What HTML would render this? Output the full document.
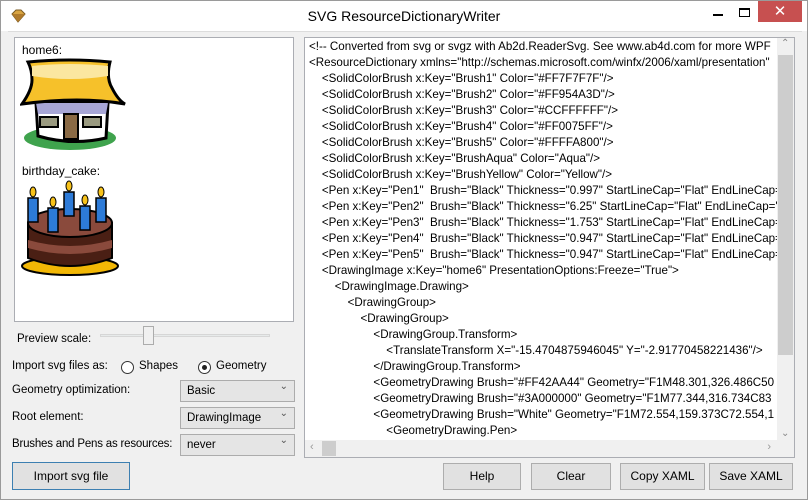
<!DOCTYPE html>
<html><head><style>
*{margin:0;padding:0;box-sizing:border-box}
body{width:808px;height:500px;overflow:hidden;background:#f0f0f0;font-family:"Liberation Sans",sans-serif;font-size:12px;color:#000;position:relative}
.win{position:absolute;left:0;top:0;width:808px;height:500px;border:1px solid #9a9a9a;background:#f0f0f0}
.title{position:absolute;left:0;top:0;width:806px;height:30px;background:#fff}
.title .t{position:absolute;left:0;width:806px;top:7px;text-align:center;font-size:14px;color:#000}
.close{position:absolute;left:757px;top:0;width:44px;height:21px;background:#c75050;color:#fff;text-align:center;font-size:15px;line-height:21px}
.a{position:absolute}
.l{position:absolute;font-size:11.5px}
.box{position:absolute;background:#fff;border:1px solid #abadb3}
.btn{position:absolute;background:#e1e1e1;border:1px solid #adadad;text-align:center;line-height:25px;font-size:12px}
.cb{position:absolute;background:#e5e5e5;border:1px solid #acacac;height:22px;line-height:20px;padding-left:6px;font-size:11.5px}
.cb:after{content:"⌄";position:absolute;right:6px;top:-4px;font-size:10px;color:#555}
.code{position:absolute;left:308px;top:38px;width:468px;height:402px;overflow:hidden;white-space:nowrap;line-height:16px;font-size:11.6px}
.code div{white-space:pre}
</style></head><body><div class="win">
<div class="title"><svg class="a" style="left:9px;top:8px" width="16" height="14"><polygon points="2,5 6,1 11,1 15,5 8,13" fill="#d9a441" stroke="#7a5a20"/><polygon points="2,5 15,5 8,13" fill="#b07a2a"/></svg>
<div class="t">SVG ResourceDictionaryWriter</div>
<div class="a" style="left:712px;top:13px;width:10px;height:2px;background:#000"></div>
<div class="a" style="left:738px;top:7px;width:11px;height:9px;border:1px solid #000;border-top-width:2px"></div>
<div class="close">✕</div></div>
<div class="a" style="left:7px;top:30px;width:794px;height:1px;background:#dcdcdc"></div>
<div class="box" style="left:13px;top:36px;width:280px;height:285px;border-color:#abadb3">
<div class="a" style="left:7px;top:5px">home6:</div>
<svg class="a" style="left:5px;top:20px" width="110" height="100" viewBox="0 0 110 100">
<ellipse cx="50" cy="80" rx="46" ry="12" fill="#3fa34d"/>
<path d="M16 45 L88 45 L86 80 Q52 88 18 78 Z" fill="#fff" stroke="#000" stroke-width="3"/>
<path d="M16 45 L88 45 L86 56 L18 56Z" fill="#a7a6d6"/>
<rect x="44" y="56" width="14" height="25" fill="#8a6a45" stroke="#000" stroke-width="2"/>
<rect x="20" y="59" width="18" height="10" fill="#9a9a80" stroke="#000" stroke-width="2"/>
<rect x="63" y="59" width="18" height="10" fill="#9a9a80" stroke="#000" stroke-width="2"/>
<path d="M8 4 Q50 0 90 4 Q86 20 92 30 Q98 42 105 46 Q60 38 2 46 Q12 32 12 22 Q12 12 8 4Z" fill="#f6c12a" stroke="#000" stroke-width="3"/>
<path d="M12 8 Q50 4 88 8 L88 18 Q50 24 12 18Z" fill="#fbe7a0"/>
</svg>
<div class="a" style="left:7px;top:126px">birthday_cake:</div>
<svg class="a" style="left:5px;top:140px" width="110" height="100" viewBox="0 0 110 100">
<ellipse cx="50" cy="88" rx="48" ry="9" fill="#f2b705" stroke="#000" stroke-width="2"/>
<path d="M8 45 L8 80 Q50 96 92 80 L92 45Z" fill="#4a1f14" stroke="#000" stroke-width="2"/>
<path d="M8 62 Q50 74 92 62 L92 70 Q50 82 8 70Z" fill="#8a4a3c"/>
<ellipse cx="50" cy="45" rx="42" ry="14" fill="#8a4a3c" stroke="#000" stroke-width="2"/>
<rect x="8" y="20" width="10" height="24" fill="#2d7bd8" stroke="#000" stroke-width="1.5"/>
<rect x="28" y="30" width="10" height="24" fill="#2d7bd8" stroke="#000" stroke-width="1.5"/>
<rect x="44" y="14" width="10" height="24" fill="#2d7bd8" stroke="#000" stroke-width="1.5"/>
<rect x="60" y="28" width="10" height="24" fill="#2d7bd8" stroke="#000" stroke-width="1.5"/>
<rect x="76" y="20" width="10" height="24" fill="#2d7bd8" stroke="#000" stroke-width="1.5"/>
<g fill="#f7c21a" stroke="#000"><ellipse cx="13" cy="14" rx="3" ry="5"/><ellipse cx="33" cy="24" rx="3" ry="5"/><ellipse cx="49" cy="8" rx="3" ry="5"/><ellipse cx="65" cy="22" rx="3" ry="5"/><ellipse cx="81" cy="14" rx="3" ry="5"/></g>
</svg>
</div>
<div class="l" style="left:16px;top:332px">Preview scale:</div>
<div class="a" style="left:99px;top:333px;width:170px;height:3px;background:#e7eaea;border:1px solid #d6d6d6"></div>
<div class="a" style="left:142px;top:325px;width:11px;height:19px;background:#f0f0f0;border:1px solid #acacac"></div>
<div class="l" style="left:11px;top:359px">Import svg files as:</div>
<div class="a" style="left:120px;top:360px;width:13px;height:13px;border:1px solid #333;border-radius:50%;background:#fff"></div>
<div class="l" style="left:138px;top:359px">Shapes</div>
<div class="a" style="left:197px;top:360px;width:13px;height:13px;border:1px solid #333;border-radius:50%;background:#fff"><div style="margin:3px;width:5px;height:5px;border-radius:50%;background:#222"></div></div>
<div class="l" style="left:215px;top:359px">Geometry</div>
<div class="l" style="left:11px;top:383px">Geometry optimization:</div>
<div class="l" style="left:11px;top:410px">Root element:</div>
<div class="l" style="left:11px;top:437px;letter-spacing:-0.2px">Brushes and Pens as resources:</div>
<div class="cb" style="left:179px;top:379px;width:115px">Basic</div>
<div class="cb" style="left:179px;top:406px;width:115px">DrawingImage</div>
<div class="cb" style="left:179px;top:433px;width:115px">never</div>
<div class="btn" style="left:11px;top:461px;width:118px;height:28px;border-color:#3c7fb1;line-height:26px">Import svg file</div>
<div class="box" style="left:303px;top:36px;width:491px;height:421px">
<div class="a" style="right:0;top:0;width:17px;height:403px;background:#f0f0f0"><div style="position:absolute;top:17px;left:1px;width:15px;height:300px;background:#cdcdcd"></div><div style="position:absolute;top:0;left:4px;font-size:10px;color:#888">⌃</div><div style="position:absolute;bottom:2px;left:4px;font-size:10px;color:#888">⌄</div></div>
<div class="a" style="left:0;bottom:0;width:472px;height:17px;background:#f0f0f0"><div style="position:absolute;left:17px;top:1px;width:14px;height:15px;background:#cdcdcd"></div><div style="position:absolute;left:5px;top:1px;font-size:11px;color:#999">‹</div><div style="position:absolute;right:6px;top:1px;font-size:11px;color:#999">›</div></div>
<div class="a" style="right:0;bottom:0;width:17px;height:17px;background:#f0f0f0"></div>
</div>
<div class="code">
<div>&lt;!-- Converted from svg or svgz with Ab2d.ReaderSvg. See www.ab4d.com for more WPF</div>
<div>&lt;ResourceDictionary xmlns="http://schemas.microsoft.com/winfx/2006/xaml/presentation"</div>
<div>    &lt;SolidColorBrush x:Key="Brush1" Color="#FF7F7F7F"/&gt;</div>
<div>    &lt;SolidColorBrush x:Key="Brush2" Color="#FF954A3D"/&gt;</div>
<div>    &lt;SolidColorBrush x:Key="Brush3" Color="#CCFFFFFF"/&gt;</div>
<div>    &lt;SolidColorBrush x:Key="Brush4" Color="#FF0075FF"/&gt;</div>
<div>    &lt;SolidColorBrush x:Key="Brush5" Color="#FFFFA800"/&gt;</div>
<div>    &lt;SolidColorBrush x:Key="BrushAqua" Color="Aqua"/&gt;</div>
<div>    &lt;SolidColorBrush x:Key="BrushYellow" Color="Yellow"/&gt;</div>
<div>    &lt;Pen x:Key="Pen1"  Brush="Black" Thickness="0.997" StartLineCap="Flat" EndLineCap="Flat"</div>
<div>    &lt;Pen x:Key="Pen2"  Brush="Black" Thickness="6.25" StartLineCap="Flat" EndLineCap="Flat"</div>
<div>    &lt;Pen x:Key="Pen3"  Brush="Black" Thickness="1.753" StartLineCap="Flat" EndLineCap="Flat"</div>
<div>    &lt;Pen x:Key="Pen4"  Brush="Black" Thickness="0.947" StartLineCap="Flat" EndLineCap="Flat"</div>
<div>    &lt;Pen x:Key="Pen5"  Brush="Black" Thickness="0.947" StartLineCap="Flat" EndLineCap="Flat"</div>
<div>    &lt;DrawingImage x:Key="home6" PresentationOptions:Freeze="True"&gt;</div>
<div>        &lt;DrawingImage.Drawing&gt;</div>
<div>            &lt;DrawingGroup&gt;</div>
<div>                &lt;DrawingGroup&gt;</div>
<div>                    &lt;DrawingGroup.Transform&gt;</div>
<div>                        &lt;TranslateTransform X="-15.4704875946045" Y="-2.91770458221436"/&gt;</div>
<div>                    &lt;/DrawingGroup.Transform&gt;</div>
<div>                    &lt;GeometryDrawing Brush="#FF42AA44" Geometry="F1M48.301,326.486C50</div>
<div>                    &lt;GeometryDrawing Brush="#3A000000" Geometry="F1M77.344,316.734C83</div>
<div>                    &lt;GeometryDrawing Brush="White" Geometry="F1M72.554,159.373C72.554,1</div>
<div>                        &lt;GeometryDrawing.Pen&gt;</div>
</div>
<div class="btn" style="left:442px;top:462px;width:78px;height:27px">Help</div>
<div class="btn" style="left:530px;top:462px;width:80px;height:27px">Clear</div>
<div class="btn" style="left:619px;top:462px;width:85px;height:27px">Copy XAML</div>
<div class="btn" style="left:708px;top:462px;width:84px;height:27px">Save XAML</div>
</div></body></html>
